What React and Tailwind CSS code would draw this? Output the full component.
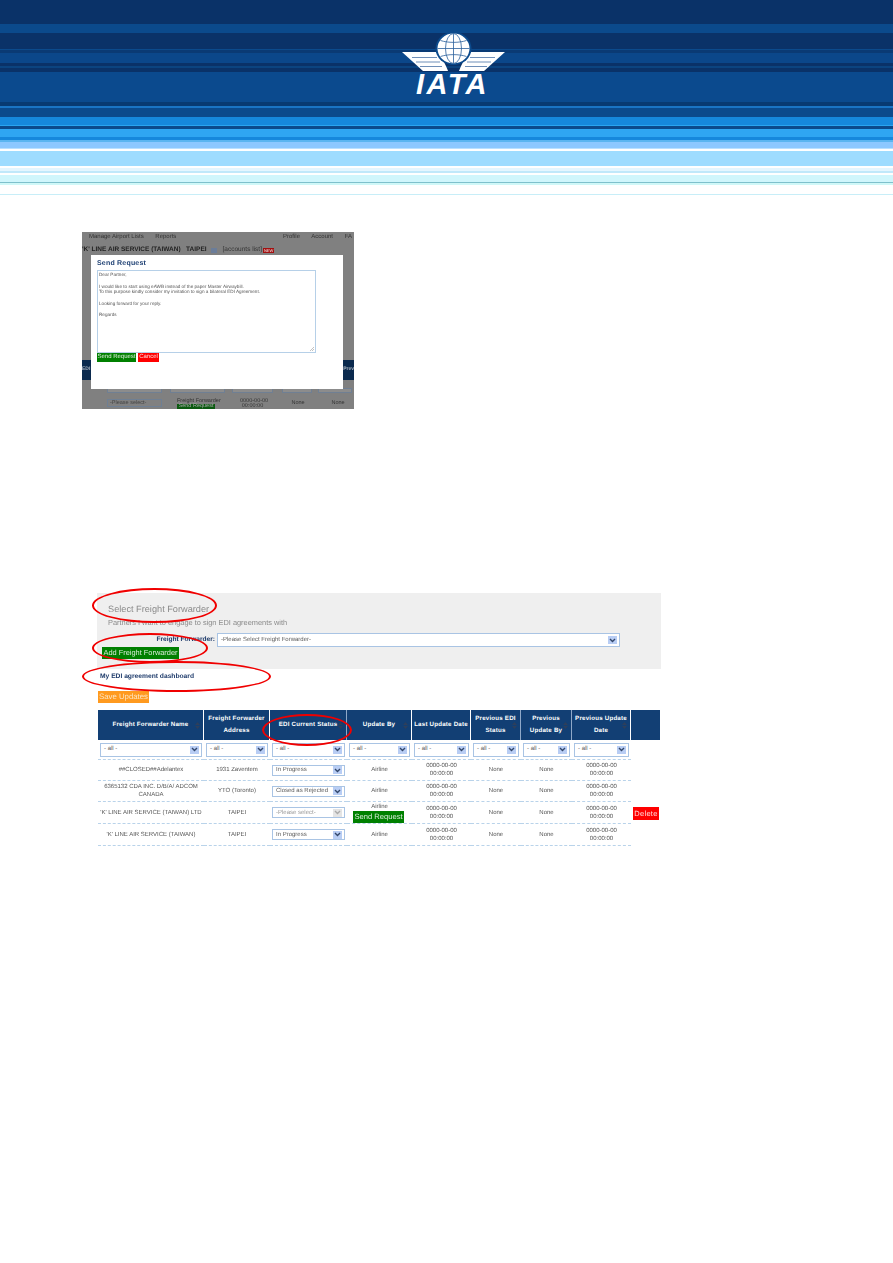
const bands = [
  'h-[24px] bg-[#0a3268]','h-[9px] bg-[#0b4a8c]','h-[16px] bg-[#0a3268]','h-[1px] bg-[#0b4a8c]','h-[3px] bg-[#0a3a74]',
  'h-[10px] bg-[#0b478a]','h-[3px] bg-[#0a3268]','h-[2px] bg-[#0b4480]','h-[4px] bg-[#0a3268]','h-[30px] bg-[#0b4a8e]',
  'h-[4px] bg-[#083a72]','h-[2px] bg-[#1a74c4]','h-[9px] bg-[#0b4a8c]','h-[8px] bg-[#1688dc]','h-[1px] bg-[#2aa4f0]',
  'h-[3px] bg-[#0b4a8c]','h-[8px] bg-[#2fa6f2]','h-[3px] bg-[#1688dc]','h-[2px] bg-[#5ab5f0]','h-[6px] bg-[#8cc8ff]',
  'h-[1px] bg-[#b8e0ff]','h-[2px] bg-white','h-[15px] bg-[#9edcff]','h-[2px] bg-white','h-[3px] bg-[#e4f6ff]',
  'h-[2px] bg-[#c0e8fa]','h-[2px] bg-white','h-[7px] bg-[#d0f6fc]','h-[1px] bg-[#7fc0cc]','h-[2px] bg-[#d0f8f8]',
  'h-[9px] bg-white','h-[1px] bg-[#c8eef8]',
];

function Logo() {
  const wing = 'M0 19 L34 19 C39 23 43 30 46 38 L21 38 Z';
  return (
    <div className="absolute left-[402px] top-[33px] w-[104px] h-[64px]">
      <svg width="104" height="40" viewBox="0 0 104 40" className="block">
        <path d={wing} fill="#fff" />
        <path d={wing} fill="#fff" transform="translate(103 0) scale(-1 1)" />
        <g stroke="#6f8fb8" strokeWidth="1">
          <path d="M10 24.5 H35 M14 29 H38 M18 33.5 H40" />
          <path d="M93 24.5 H68 M89 29 H65 M85 33.5 H63" />
        </g>
        <ellipse cx="51.5" cy="15.5" rx="18" ry="16.5" fill="#0b4a8c" />
        <ellipse cx="51.5" cy="15.5" rx="16" ry="15" fill="#fff" />
        <g stroke="#2a5f9c" strokeWidth="0.8" fill="none">
          <ellipse cx="51.5" cy="15.5" rx="8" ry="15" />
          <path d="M51.5 0.5 V30.5 M35.5 15.5 H67.5 M38.5 7.5 C46 10 57 10 64.5 7.5 M38.5 23.5 C46 21 57 21 64.5 23.5" />
        </g>
      </svg>
      <div className="absolute left-[14px] top-[37px] text-[29px] leading-[31px] font-bold italic text-white tracking-[2.4px]">IATA</div>
    </div>
  );
}

function Chevron({ muted }) {
  return (
    <span className={`w-[9px] h-[8px] flex items-center justify-center shrink-0 ${muted ? 'bg-[#e4e4e4]' : 'bg-[#b8cdf4]'}`}>
      <svg width="7" height="5" viewBox="0 0 7 5">
        <path d="M1 1 L3.5 3.5 L6 1" fill="none" stroke={muted ? '#aaa' : '#33476b'} strokeWidth="1.4" />
      </svg>
    </span>
  );
}

function Select({ label, muted, className = '' }) {
  return (
    <div className={`border border-[#a9c4e4] bg-white flex items-center justify-between pl-[3px] pr-[2px] text-[6px] ${muted ? 'text-[#999]' : 'text-[#5c5c5c]'} ${className}`}>
      <span className="whitespace-nowrap">{label}</span>
      <Chevron muted={muted} />
    </div>
  );
}

function Sort() {
  return (
    <svg width="5" height="7" viewBox="0 0 5 7" className="absolute right-[3px] top-[12px]">
      <path d="M2.5 0 L5 3 H0 Z M2.5 7 L5 4 H0 Z" fill="#2d3f5c" />
    </svg>
  );
}

const gridCols = 'grid grid-cols-[106px_66px_77px_65px_59px_50px_51px_59px_29px]';
const heads = [
  { t: 'Freight Forwarder Name', e: 'border-white', s: true },
  { t: 'Freight Forwarder Address', e: 'border-white' },
  { t: 'EDI Current Status', e: 'border-[#8fa8c8]', s: true },
  { t: 'Update By', e: 'border-white', s: true },
  { t: 'Last Update Date', e: 'border-white' },
  { t: 'Previous EDI Status', e: 'border-[#8fa8c8]', s: true },
  { t: 'Previous Update By', e: 'border-[#8fa8c8]', s: true },
  { t: 'Previous Update Date', e: 'border-white', s: true },
  { t: '', e: 'border-[#123f74]' },
];
const rows = [
  { name: '##CLOSED##Adelantex', addr: '1931 Zaventem', status: 'In Progress', h: 'h-[21px]' },
  { name: '6365132 CDA INC. D/B/A/ ADCOM CANADA', addr: 'YTO (Toronto)', status: 'Closed as Rejected', h: 'h-[21px]' },
  { name: "'K' LINE AIR SERVICE (TAIWAN) LTD", addr: 'TAIPEI', status: '-Please select-', muted: true, action: true, h: 'h-[22px]' },
  { name: "'K' LINE AIR SERVICE (TAIWAN)", addr: 'TAIPEI', status: 'In Progress', h: 'h-[22px]' },
];
const cell = 'flex items-center justify-center text-center text-[6px] leading-[8px] text-[#555] border-b border-dashed border-[#b9d3ea]';

function Screenshot() {
  return (
    <div className="relative ml-[82px] w-[272px] h-[177px] bg-[#808080] overflow-hidden blur-[0.3px]">
      <div className="flex justify-between pl-[7px] pr-[2px] pt-[1px] text-[6px] leading-[8px] text-[#333]">
        <span className="whitespace-nowrap">Manage Airport Lists &nbsp;&nbsp;&nbsp;&nbsp;&nbsp; Reports</span>
        <span className="whitespace-nowrap">Profile &nbsp;&nbsp;&nbsp;&nbsp;&nbsp; Account &nbsp;&nbsp;&nbsp;&nbsp;&nbsp; FA</span>
      </div>
      <div className="flex items-center mt-[5px] text-[6.5px] leading-[8px] text-[#222] whitespace-nowrap">
        <span className="font-bold">'K' LINE AIR SERVICE (TAIWAN) &nbsp; TAIPEI</span>
        <span className="ml-[4px] w-[6px] h-[5px] bg-[#6b7d99]" />
        <span className="ml-[6px] text-[#333]">[accounts list]</span>
        <span className="ml-[1px] px-[1px] bg-[#a31010] text-[4px] leading-[5px] text-[#eee]">NEW</span>
      </div>
      <div className="mt-[106px] h-[20px] bg-[#0b2a4e] flex justify-between items-center text-[5px] font-bold text-[#aab4c0]">
        <span>EDI</span>
        <span>Prev</span>
      </div>
      <div className="mt-[8px] flex pl-[25px]">
        <div className="w-[55px] h-[5px] border border-[#6f7f93] bg-[#8c8c8c]" />
        <div className="ml-[8px] w-[55px] h-[5px] border border-[#6f7f93] bg-[#8c8c8c]" />
        <div className="ml-[7px] w-[41px] h-[5px] border border-[#6f7f93] bg-[#8c8c8c]" />
        <div className="ml-[9px] w-[30px] h-[5px] border border-[#6f7f93] bg-[#8c8c8c]" />
        <div className="ml-[6px] w-[34px] h-[5px] border border-[#6f7f93] bg-[#8c8c8c]" />
      </div>
      <div className="mt-[6px] flex items-start pl-[25px] text-[5.5px] leading-[5px] text-[#333] whitespace-nowrap">
        <div className="w-[55px] h-[8px] border border-[#6f7f93] px-[2px] pt-[1px] text-[#444]">-Please select-</div>
        <div className="ml-[15px] w-[38px] text-center">Freight Forwarder
          <div className="bg-[#0b5a10] text-[#aaa] h-[6px]">Send Request</div>
        </div>
        <div className="ml-[25px] w-[25px] text-center">0000-00-00<br />00:00:00</div>
        <div className="ml-[26px] w-[14px] text-center pt-[2px]">None</div>
        <div className="ml-[26px] w-[14px] text-center pt-[2px]">None</div>
      </div>
      <div className="absolute left-[9px] top-[23px] w-[252px] h-[134px] bg-white">
        <div className="absolute left-[6px] top-[4px] text-[7px] leading-[9px] font-bold text-[#1d3f72] tracking-[0.2px]">Send Request</div>
        <div className="absolute left-[6px] top-[15px] w-[219px] h-[83px] border border-[#b6d0e8] px-[1px] pt-[1px] text-[4.65px] leading-[5.75px] text-[#555]">
          <p>Dear Partner,</p>
          <p>&nbsp;</p>
          <p>I would like to start using eAWB instead of the paper Master Airwaybill.</p>
          <p>To this purpose kindly consider my invitation to sign a bilateral EDI Agreement.</p>
          <p>&nbsp;</p>
          <p>Looking forward for your reply.</p>
          <p>&nbsp;</p>
          <p>Regards</p>
          <svg width="5" height="5" viewBox="0 0 5 5" className="absolute right-[1px] bottom-[1px]">
            <path d="M1 5 L5 1 M3 5 L5 3" stroke="#999" strokeWidth="0.6" />
          </svg>
        </div>
        <div className="absolute left-[6px] top-[98px] flex gap-[2px] text-[6px] leading-[9px] text-[#dfeedd] whitespace-nowrap">
          <span className="w-[39px] h-[9px] bg-[#008000] text-center">Send Request</span>
          <span className="w-[21px] h-[9px] bg-[#ff0000] text-center text-[#ffdcdc]">Cancel</span>
        </div>
      </div>
    </div>
  );
}

export default function App() {
  return (
    <div className="relative w-[893px] h-[1263px] bg-white overflow-hidden font-['Liberation_Sans',Arial,sans-serif] [text-rendering:geometricPrecision]">
      <header className="relative">
        {bands.map((b, i) => <div key={i} className={b} />)}
        <Logo />
      </header>

      <div className="mt-[37px]"><Screenshot /></div>

      <section className="relative mt-[184px] ml-[97px] w-[564px]">
        <div className="relative h-[76px] bg-[#efefef] blur-[0.2px]">
          <div className="pt-[11px] pl-[11px] text-[9.2px] leading-[11px] text-[#8a8a8a]">Select Freight Forwarder</div>
          <div className="pt-[3px] pl-[11px] text-[7.4px] leading-[10px] text-[#8a8a8a]">Partners I want to engage to sign EDI agreements with</div>
          <div className="flex items-center mt-[5px]">
            <span className="w-[118px] text-right text-[6.6px] font-bold text-[#1d3a6a] whitespace-nowrap">Freight Forwarder:</span>
            <Select label="-Please Select Freight Forwarder-" className="ml-[2px] w-[403px] h-[14px]" />
          </div>
          <div className="ml-[5px] w-[77px] h-[12px] bg-[#008000] text-[7.4px] leading-[12px] text-center text-[#d9ecd9] whitespace-nowrap">Add Freight Forwarder</div>
        </div>
        <div className="pl-[3px] pt-[3px] text-[6.7px] leading-[9px] font-bold text-[#1d3a6a] blur-[0.2px]">My EDI agreement dashboard</div>
        <div className="ml-[1px] mt-[10px] w-[51px] h-[12px] bg-[#ff9a1f] text-[7.8px] leading-[12px] text-center text-[#fde6c4] blur-[0.2px] whitespace-nowrap">Save Updates</div>

        <div className="ml-[1px] mt-[7px] w-[562px] blur-[0.3px]">
          <div className={`${gridCols} h-[30px]`}>
            {heads.map((h, i) => (
              <div key={i} className={`relative flex items-center justify-center text-center px-[2px] border-r ${h.e} bg-[#123f74] text-[6.2px] leading-[12px] font-bold tracking-[0.2px] text-white`}>
                {h.t}
                {h.s && <Sort />}
              </div>
            ))}
          </div>
          <div className={`${gridCols} h-[20px] items-center`}>
            {heads.slice(0, 8).map((_, i) => (
              <div key={i} className="h-full flex items-center border-b border-dashed border-[#b9d3ea] px-[2px]">
                <Select label="- all -" className="w-full h-[14px]" />
              </div>
            ))}
          </div>
          {rows.map((r, i) => (
            <div key={i} className={`${gridCols} ${r.h}`}>
              <div className={cell}>{r.name}</div>
              <div className={cell}>{r.addr}</div>
              <div className={`${cell} px-[2px]`}><Select label={r.status} muted={r.muted} className="w-full h-[11px]" /></div>
              <div className={`${cell} relative`}>
                {r.action ? <span className="absolute top-[1px] left-0 right-0">Airline</span> : 'Airline'}
                {r.action && <div className="absolute left-[6px] top-[9px] w-[51px] h-[12px] bg-[#008000] text-[7.6px] leading-[12px] text-[#d9ecd9] whitespace-nowrap">Send Request</div>}
              </div>
              <div className={`${cell} whitespace-pre-line`}>{'0000-00-00\n00:00:00'}</div>
              <div className={cell}>None</div>
              <div className={cell}>None</div>
              <div className={`${cell} whitespace-pre-line`}>{'0000-00-00\n00:00:00'}</div>
              <div className="flex items-center pl-[2px]">
                {r.action && <span className="w-[26px] h-[13px] bg-[#ff0000] text-[7.5px] leading-[13px] text-center text-[#ffd8d8] tracking-[0.3px]">Delete</span>}
              </div>
            </div>
          ))}
        </div>

        <div className="absolute left-[-5px] top-[-5px] w-[125px] h-[35px] rounded-[50%] border-2 border-[#f00000]" />
        <div className="absolute left-[-5px] top-[40px] w-[116px] h-[30px] rounded-[50%] border-2 border-[#f00000]" />
        <div className="absolute left-[-15px] top-[68px] w-[189px] h-[31px] rounded-[50%] border-2 border-[#f00000]" />
        <div className="absolute left-[165px] top-[121px] w-[90px] h-[32px] rounded-[50%] border-2 border-[#f00000]" />
      </section>
    </div>
  );
}
